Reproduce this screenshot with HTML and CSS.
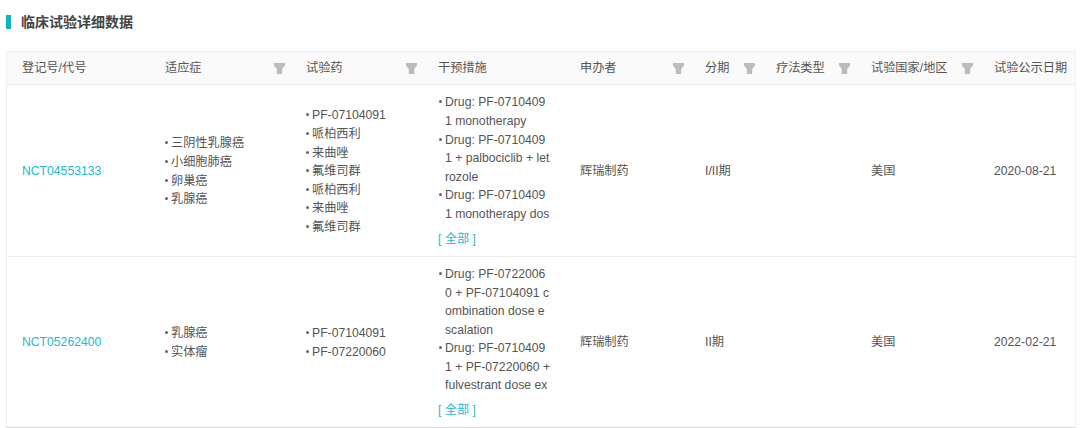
FILE: index.html
```html
<!DOCTYPE html>
<html lang="zh">
<head>
<meta charset="utf-8">
<title>临床试验详细数据</title>
<link rel="stylesheet" href="styles.css">
</head>
<body>
<svg class="sprite" width="0" height="0"><defs><symbol id="funnel" viewBox="0 0 11 11"><path d="M0 0H11V2.6L8.2 6V11H2.8V6L0 2.6Z"/></symbol></defs></svg>
<main class="page">
  <h2 class="title">临床试验详细数据</h2>
  <table class="grid">
    <colgroup>
      <col class="c1"><col class="c2"><col class="c3"><col class="c4"><col class="c5"><col class="c6"><col class="c7"><col class="c8"><col class="c9">
    </colgroup>
    <thead>
      <tr>
        <th>登记号/代号</th>
        <th><div class="th"><span>适应症</span><svg class="filter"><use href="#funnel"/></svg></div></th>
        <th><div class="th"><span>试验药</span><svg class="filter"><use href="#funnel"/></svg></div></th>
        <th>干预措施</th>
        <th><div class="th"><span>申办者</span><svg class="filter"><use href="#funnel"/></svg></div></th>
        <th><div class="th"><span>分期</span><svg class="filter"><use href="#funnel"/></svg></div></th>
        <th><div class="th"><span>疗法类型</span><svg class="filter"><use href="#funnel"/></svg></div></th>
        <th><div class="th"><span>试验国家/地区</span><svg class="filter"><use href="#funnel"/></svg></div></th>
        <th>试验公示日期</th>
      </tr>
    </thead>
    <tbody>
      <tr class="r1">
        <td><a class="link" href="#">NCT04553133</a></td>
        <td><ul class="list short"><li>三阴性乳腺癌</li><li>小细胞肺癌</li><li>卵巢癌</li><li>乳腺癌</li></ul></td>
        <td><ul class="list short"><li>PF-07104091</li><li>哌柏西利</li><li>来曲唑</li><li>氟维司群</li><li>哌柏西利</li><li>来曲唑</li><li>氟维司群</li></ul></td>
        <td>
          <ul class="list"><li>Drug: PF-0710409<br>1 monotherapy</li><li>Drug: PF-0710409<br>1 + palbociclib + let<br>rozole</li><li>Drug: PF-0710409<br>1 monotherapy dos</li></ul>
          <a class="link more" href="#">[ 全部 ]</a>
        </td>
        <td class="cjk">辉瑞制药</td>
        <td class="cjk">I/II期</td>
        <td></td>
        <td class="cjk">美国</td>
        <td>2020-08-21</td>
      </tr>
      <tr class="r2">
        <td><a class="link" href="#">NCT05262400</a></td>
        <td><ul class="list short"><li>乳腺癌</li><li>实体瘤</li></ul></td>
        <td><ul class="list short"><li>PF-07104091</li><li>PF-07220060</li></ul></td>
        <td>
          <ul class="list"><li>Drug: PF-0722006<br>0 + PF-07104091 c<br>ombination dose e<br>scalation</li><li>Drug: PF-0710409<br>1 + PF-07220060 +<br>fulvestrant dose ex</li></ul>
          <a class="link more" href="#">[ 全部 ]</a>
        </td>
        <td class="cjk">辉瑞制药</td>
        <td class="cjk">II期</td>
        <td></td>
        <td class="cjk">美国</td>
        <td>2022-02-21</td>
      </tr>
    </tbody>
  </table>
</main>
</body>
</html>
```
FILE: styles.css
```css
html, body {
  margin: 0;
  padding: 0;
  background: #fff;
}
body {
  height: 428px;
  overflow: hidden;
  font-family: "Liberation Sans", "Noto Sans CJK SC", sans-serif;
  font-size: 12.2px;
  color: #555;
}
.sprite {
  display: block;
  height: 0;
}
.page {
  padding: 15px 0 0 6px;
}
.title {
  margin: 0 0 22px;
  height: 14px;
  padding-left: 10px;
  border-left: 5px solid #0db4c9;
  font-size: 14px;
  line-height: 14px;
  font-weight: 700;
  color: #444;
}
.grid {
  width: 1070px;
  table-layout: fixed;
  border-collapse: separate;
  border-spacing: 0;
  border: 1px solid #f0f0f0;
  border-bottom: 1px solid #dcdcdc;
  background: #fff;
}
.c1 { width: 143px; }
.c2 { width: 141px; }
.c3 { width: 132px; }
.c4 { width: 142px; }
.c5 { width: 125px; }
.c6 { width: 71px; }
.c7 { width: 95px; }
.c8 { width: 123px; }
.c9 { width: 96px; }
th {
  height: 30px;
  padding: 0 0 2px 15px;
  background: #fafafa;
  border-bottom: 1px solid #e9e9e9;
  font-weight: 400;
  text-align: left;
  white-space: nowrap;
}
.th {
  display: flex;
  align-items: center;
  justify-content: space-between;
  padding-right: 6px;
}
.filter {
  width: 11px;
  height: 11px;
  margin-top: 2px;
  fill: #bcbcbc;
}
td {
  padding: 0 0 0 15px;
  vertical-align: middle;
  white-space: nowrap;
}
.r1 td {
  height: 171px;
  border-bottom: 1px solid #eee;
}
.r2 td {
  height: 170px;
}
.r1 .cjk {
  height: 169px;
  padding-bottom: 2px;
}
.r2 .cjk {
  height: 168px;
  padding-bottom: 2px;
}
.list {
  margin: 0;
  padding: 0 0 0 7px;
  list-style: none;
  line-height: 18.6px;
}
.r1 .short,
.r2 .short {
  padding: 2px 0 0 6px;
}
.list li::before {
  content: "";
  display: inline-block;
  width: 3px;
  height: 3px;
  margin: 0 3px 3px -6px;
  border-radius: 50%;
  background: #666;
}
.link {
  color: #22b8cf;
  text-decoration: none;
}
.more {
  display: block;
  margin-top: 6px;
  line-height: 18px;
}
```
